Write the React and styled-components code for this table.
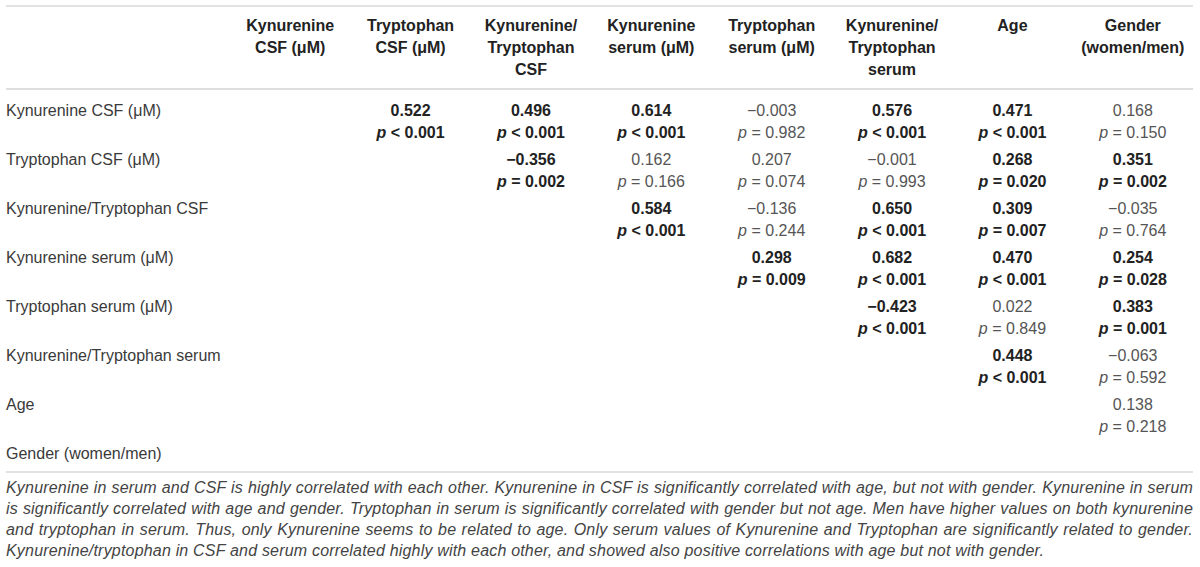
import React from 'react';
import styled, { createGlobalStyle } from 'styled-components';

const GlobalStyle = createGlobalStyle`
  body {
    margin: 0;
    background: #ffffff;
    font-family: "Liberation Sans", Arial, sans-serif;
    color: #333;
  }
`;

// Contenedor principal de la tabla
const Page = styled.div`
  padding: 5px 7px 0 6px;
`;

const Table = styled.table`
  width: 100%;
  border-collapse: collapse;
  table-layout: fixed;
  border-top: 2px solid #e2e2e2;
  font-size: 16px;
  line-height: 22px;
`;

const HeadRow = styled.tr`
  border-bottom: 2px solid #dedede;
`;

const HeadCell = styled.th`
  width: ${(p) => (p.$first ? '224px' : 'auto')};
  padding: 8px 0 7px;
  font-weight: 700;
  color: #222;
  text-align: center;
  vertical-align: top;
`;

const BodyRow = styled.tr`
  &:first-child td {
    padding-top: 10px;
  }
  &:last-child td {
    padding-bottom: 6px;
  }
`;

const LabelCell = styled.td`
  padding: 3px 0 2px;
  text-align: left;
  vertical-align: top;
  color: #3a3a3a;
`;

const ValueCell = styled.td`
  padding: 3px 0 2px;
  text-align: center;
  vertical-align: top;
  font-weight: ${(p) => (p.$bold ? 700 : 400)};
  color: ${(p) => (p.$bold ? '#222' : '#555')};
  white-space: nowrap;
`;

const Line = styled.div``;

const PItalic = styled.i`
  font-style: italic;
`;

const Caption = styled.p`
  margin: 0;
  padding: 4px 0 0;
  border-top: 2px solid #e2e2e2;
  font-style: italic;
  font-size: 16px;
  line-height: 21px;
  letter-spacing: 0.19px;
  color: #444;
  text-align: justify;
`;

const headers = [
  ['Kynurenine', 'CSF (μM)'],
  ['Tryptophan', 'CSF (μM)'],
  ['Kynurenine/', 'Tryptophan', 'CSF'],
  ['Kynurenine', 'serum (μM)'],
  ['Tryptophan', 'serum (μM)'],
  ['Kynurenine/', 'Tryptophan', 'serum'],
  ['Age'],
  ['Gender', '(women/men)'],
];

const b = (r, op, p) => ({ r, op, p, bold: true });
const n = (r, op, p) => ({ r, op, p, bold: false });
const _ = null;

const rows = [
  ['Kynurenine CSF (μM)', [_, b('0.522', '<', '0.001'), b('0.496', '<', '0.001'), b('0.614', '<', '0.001'), n('−0.003', '=', '0.982'), b('0.576', '<', '0.001'), b('0.471', '<', '0.001'), n('0.168', '=', '0.150')]],
  ['Tryptophan CSF (μM)', [_, _, b('−0.356', '=', '0.002'), n('0.162', '=', '0.166'), n('0.207', '=', '0.074'), n('−0.001', '=', '0.993'), b('0.268', '=', '0.020'), b('0.351', '=', '0.002')]],
  ['Kynurenine/Tryptophan CSF', [_, _, _, b('0.584', '<', '0.001'), n('−0.136', '=', '0.244'), b('0.650', '<', '0.001'), b('0.309', '=', '0.007'), n('−0.035', '=', '0.764')]],
  ['Kynurenine serum (μM)', [_, _, _, _, b('0.298', '=', '0.009'), b('0.682', '<', '0.001'), b('0.470', '<', '0.001'), b('0.254', '=', '0.028')]],
  ['Tryptophan serum (μM)', [_, _, _, _, _, b('−0.423', '<', '0.001'), n('0.022', '=', '0.849'), b('0.383', '=', '0.001')]],
  ['Kynurenine/Tryptophan serum', [_, _, _, _, _, _, b('0.448', '<', '0.001'), n('−0.063', '=', '0.592')]],
  ['Age', [_, _, _, _, _, _, _, n('0.138', '=', '0.218')]],
  ['Gender (women/men)', [_, _, _, _, _, _, _, _]],
];

const caption =
  'Kynurenine in serum and CSF is highly correlated with each other. Kynurenine in CSF is significantly correlated with age, but not with gender. Kynurenine in serum is significantly correlated with age and gender. Tryptophan in serum is significantly correlated with gender but not age. Men have higher values on both kynurenine and tryptophan in serum. Thus, only Kynurenine seems to be related to age. Only serum values of Kynurenine and Tryptophan are significantly related to gender. Kynurenine/tryptophan in CSF and serum correlated highly with each other, and showed also positive correlations with age but not with gender.';

const App = () => {
  return (
    <Page>
      <GlobalStyle />
      <Table>
        <thead>
          <HeadRow>
            <HeadCell $first />
            {headers.map((lines, i) => (
              <HeadCell key={i}>
                {lines.map((l) => (
                  <Line key={l}>{l}</Line>
                ))}
              </HeadCell>
            ))}
          </HeadRow>
        </thead>
        <tbody>
          {rows.map(([label, cells]) => (
            <BodyRow key={label}>
              <LabelCell>{label}</LabelCell>
              {cells.map((c, i) => (
                <ValueCell key={i} $bold={c?.bold}>
                  {c && (
                    <>
                      <Line>{c.r}</Line>
                      <Line>
                        <PItalic>p</PItalic> {c.op} {c.p}
                      </Line>
                    </>
                  )}
                </ValueCell>
              ))}
            </BodyRow>
          ))}
        </tbody>
      </Table>
      <Caption>{caption}</Caption>
    </Page>
  );
};

export default App;
